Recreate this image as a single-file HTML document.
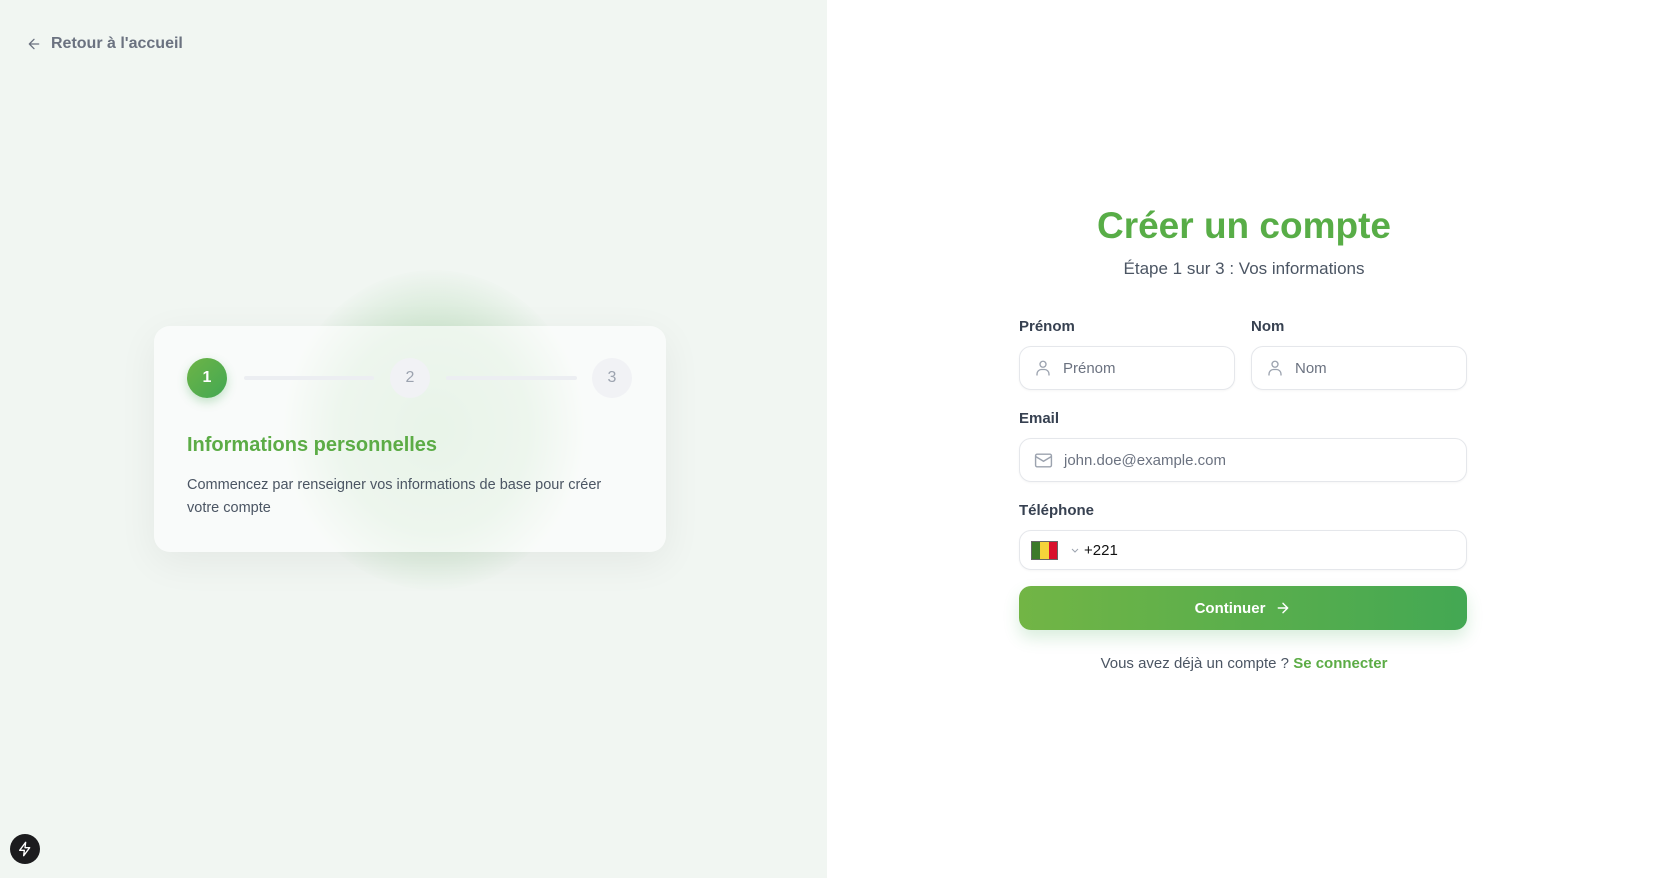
<!DOCTYPE html>
<html><head><meta charset="utf-8"><style>
*{box-sizing:border-box;margin:0;padding:0}
body{width:1661px;height:878px;overflow:hidden;font-family:"Liberation Sans",sans-serif;background:#fff;position:relative}
.left{position:absolute;left:0;top:0;width:827px;height:878px;background:#f1f6f2;overflow:hidden}
.back{position:absolute;left:26px;top:35px;display:flex;align-items:center;gap:9px;color:#6b7280;font-weight:700;font-size:16px}
.blob{position:absolute;left:284px;top:270px;width:300px;height:320px;border-radius:50%;background:radial-gradient(ellipse at center,rgba(120,190,120,.35) 0%,rgba(120,190,120,.25) 45%,rgba(241,246,242,0) 72%)}
.card{position:absolute;left:154px;top:326px;width:512px;height:226px;border-radius:16px;background:rgba(255,255,255,.6);box-shadow:0 10px 40px rgba(0,0,0,.06)}
.circ{position:absolute;width:40px;height:40px;border-radius:50%;top:32px;display:flex;align-items:center;justify-content:center;font-size:16px}
.c1{left:33px;background:linear-gradient(135deg,#6db446,#43a853);color:#fff;font-weight:700;box-shadow:0 4px 10px rgba(67,168,83,.3)}
.c2{left:236px;background:#f1f2f5;color:#9ca3af}
.c3{left:438px;background:#f1f2f5;color:#9ca3af}
.line{position:absolute;top:50px;height:4px;border-radius:2px;background:#eceef2}
.ct{position:absolute;left:33px;top:108px;font-size:20px;font-weight:700;color:#5cac46}
.cd{position:absolute;left:33px;top:148px;width:440px;font-size:14.5px;line-height:23px;color:#4b5563}
.bolt{position:absolute;left:10px;top:834px;width:30px;height:30px;border-radius:50%;background:#1c1c1e;display:flex;align-items:center;justify-content:center}
h1{position:absolute;left:827px;width:834px;text-align:center;top:205px;font-size:37px;font-weight:800;color:#58ad47}
.sub{position:absolute;left:827px;width:834px;text-align:center;top:259px;font-size:17px;color:#4b5563}
.lbl{position:absolute;font-size:15px;font-weight:700;color:#374151}
.inp{position:absolute;height:44px;border:1px solid #e5e7eb;border-radius:12px;background:#fff;display:flex;align-items:center;padding-left:14px;gap:11px;font-size:15px;color:#6b7280;box-shadow:0 1px 2px rgba(0,0,0,.04)}
.btn{position:absolute;left:1019px;top:586px;width:448px;height:44px;border-radius:12px;background:linear-gradient(90deg,#72b545,#43a853);color:#fff;font-weight:700;font-size:15px;display:flex;align-items:center;justify-content:center;gap:10px;box-shadow:0 8px 16px rgba(67,168,83,.2)}
.foot{position:absolute;left:827px;width:834px;text-align:center;top:655px;font-size:15px;color:#4b5563}
.foot b{color:#5cac46}
</style></head><body>
<div class="left">
<div class="back"><svg width="16" height="16" viewBox="0 0 24 24" fill="none" stroke="#6b7280" stroke-width="2" stroke-linecap="round" stroke-linejoin="round"><path d="M19 12H5M12 19l-7-7 7-7"/></svg>Retour à l'accueil</div>
<div class="blob"></div>
<div class="card">
<div class="line" style="left:90px;width:130px"></div>
<div class="line" style="left:292px;width:131px"></div>
<div class="circ c1">1</div><div class="circ c2">2</div><div class="circ c3">3</div>
<div class="ct">Informations personnelles</div>
<div class="cd">Commencez par renseigner vos informations de base pour créer votre compte</div>
</div>
<div class="bolt"><svg width="16" height="16" viewBox="0 0 24 24" fill="none" stroke="#fff" stroke-width="2" stroke-linejoin="round"><path d="M13 2L4 14h7l-1 8 9-12h-7l1-8z"/></svg></div>
</div>
<h1>Créer un compte</h1>
<div class="sub">Étape 1 sur 3 : Vos informations</div>
<div class="lbl" style="left:1019px;top:318px">Prénom</div>
<div class="lbl" style="left:1251px;top:318px">Nom</div>
<div class="inp" style="left:1019px;top:346px;width:216px"><svg width="18" height="18" viewBox="0 0 24 24" fill="none" stroke="#9ca3af" stroke-width="1.8"><circle cx="12" cy="7" r="4"/><path d="M4 22v-2a6 6 0 0 1 6-6h4a6 6 0 0 1 6 6v2"/></svg>Prénom</div>
<div class="inp" style="left:1251px;top:346px;width:216px"><svg width="18" height="18" viewBox="0 0 24 24" fill="none" stroke="#9ca3af" stroke-width="1.8"><circle cx="12" cy="7" r="4"/><path d="M4 22v-2a6 6 0 0 1 6-6h4a6 6 0 0 1 6 6v2"/></svg>Nom</div>
<div class="lbl" style="left:1019px;top:410px">Email</div>
<div class="inp" style="left:1019px;top:438px;width:448px"><svg width="19" height="19" viewBox="0 0 24 24" fill="none" stroke="#9ca3af" stroke-width="1.8"><rect x="2" y="4" width="20" height="16" rx="2"/><path d="M22 7l-10 6L2 7"/></svg>john.doe@example.com</div>
<div class="lbl" style="left:1019px;top:502px">Téléphone</div>
<div class="inp" style="left:1019px;top:530px;width:448px;height:40px;color:#111;gap:4px;padding-left:11px"><span style="display:flex;width:27px;height:19px;border:1px solid #666"><i style="flex:1;background:#3d7a2a"></i><i style="flex:1;background:#f5d33a"></i><i style="flex:1;background:#d9112c"></i></span><svg width="10" height="10" viewBox="0 0 10 10" style="margin-left:8px"><path d="M2 4l3 3 3-3" fill="none" stroke="#9ca3af" stroke-width="1"/></svg>+221</div>
<div class="btn">Continuer <svg width="16" height="16" viewBox="0 0 24 24" fill="none" stroke="#fff" stroke-width="2.2" stroke-linecap="round" stroke-linejoin="round"><path d="M5 12h14M12 5l7 7-7 7"/></svg></div>
<div class="foot">Vous avez déjà un compte ? <b>Se connecter</b></div>
</body></html>
